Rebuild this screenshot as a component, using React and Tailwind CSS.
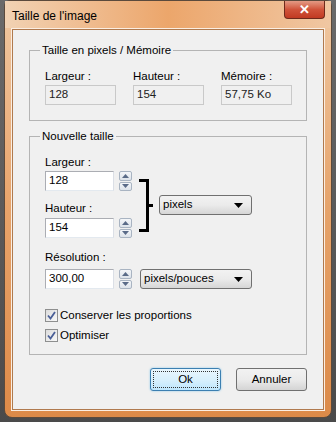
import React from 'react';

const font = { fontFamily: '"Liberation Sans", Arial, sans-serif' };

function Spin() {
  return (
    <div className="flex h-[20px] w-[13px] flex-col gap-px">
      <div className="flex flex-1 items-center justify-center rounded-[2px] border border-[#a9b4c2] bg-gradient-to-b from-[#f4f6f9] to-[#dde3ea]">
        <svg width="7" height="4" viewBox="0 0 7 4"><path d="M0 4 L3.5 0 L7 4 Z" fill="#5a6b88" /></svg>
      </div>
      <div className="flex flex-1 items-center justify-center rounded-[2px] border border-[#a9b4c2] bg-gradient-to-b from-[#f4f6f9] to-[#dde3ea]">
        <svg width="7" height="4" viewBox="0 0 7 4"><path d="M0 0 L7 0 L3.5 4 Z" fill="#5a6b88" /></svg>
      </div>
    </div>
  );
}

function Field({ value }) {
  return (
    <div className="flex items-center gap-[5px]">
      <div className="flex h-[20px] w-[69px] items-center border border-[#abadb3] border-b-[#e3e9ef] border-r-[#dbdfe6] bg-white pl-[3px] text-black">
        {value}
      </div>
      <Spin />
    </div>
  );
}

function Combo({ label, width }) {
  return (
    <div
      className={`flex h-[20px] items-center justify-between rounded-[3px] border border-[#707070] bg-gradient-to-b from-[#f2f2f2] via-[#ebebeb] to-[#d6d6d6] pl-[3px] pr-[8px] text-black ${width}`}
    >
      <span>{label}</span>
      <svg width="9" height="5" viewBox="0 0 9 5"><path d="M0 0 L9 0 L4.5 5 Z" fill="#000" /></svg>
    </div>
  );
}

function Check({ label }) {
  return (
    <label className="flex h-[13px] items-center gap-[2px] text-black">
      <span className="flex h-[13px] w-[13px] items-center justify-center border border-[#8e8f8f] bg-gradient-to-br from-[#dcdcdc] to-[#f8f8f8]">
        <svg width="9" height="9" viewBox="0 0 9 9">
          <path d="M1 4.5 L3.5 7.5 L8 1" fill="none" stroke="#4a5f97" strokeWidth="1.8" />
        </svg>
      </span>
      <span>{label}</span>
    </label>
  );
}

function Button({ children, primary }) {
  return (
    <button
      className={`flex h-[23px] w-[71px] items-center justify-center rounded-[3px] border text-black ${
        primary
          ? 'border-[#3c7fb1] bg-gradient-to-b from-[#eaf6fd] via-[#d9f0fc] to-[#bee6fd] shadow-[0_0_2px_#7ec3e8]'
          : 'border-[#707070] bg-gradient-to-b from-[#f2f2f2] via-[#ebebeb] to-[#d4d4d4]'
      }`}
    >
      {primary ? (
        <span className="flex h-[17px] w-[65px] items-center justify-center border border-dotted border-[#333]">
          {children}
        </span>
      ) : (
        children
      )}
    </button>
  );
}

export default function App() {
  return (
    <div className="h-[422px] w-[336px] overflow-hidden bg-gradient-to-b from-[#6a6a6a] to-[#4a4a4a]" style={font}>
      <div className="ml-[4px] h-[418px] w-[328px] rounded-b-[8px] rounded-t-[6px] border border-[#5b4a3c] bg-gradient-to-b from-[#efc8a2] via-[#e6a36a] to-[#dc8a48]">
        {/* barre de titre */}
        <div className="flex h-[27px] items-start justify-between bg-gradient-to-r from-[#f1d2b3] via-[#eca66b] to-[#f0c7a2] pl-[7px] pr-[6px]">
          <span className="mt-[6px] text-[12px] text-black">Taille de l'image</span>
          <div className="flex h-[18px] w-[41px] items-center justify-center rounded-b-[4px] border border-t-0 border-[#6e2a1c] bg-gradient-to-b from-[#e39a84] via-[#d0533a] to-[#c13a22] text-[13px] font-bold leading-none text-white">
            ✕
          </div>
        </div>

        {/* zone cliente */}
        <div className="mx-[6px] h-[383px] border border-[#fbeee2] bg-[#fbeee2]">
          <div className="h-full border border-[#b07a4e] bg-[#f0f0f0] px-[16px] pt-[13px] text-[11.5px] text-black">
            <fieldset className="border border-[#b4b4b4] pb-[15px] pl-[15px] pr-[14px]">
              <legend className="ml-[-5px] px-[2px] leading-[14px]">Taille en pixels / Mémoire</legend>
              <div className="mt-[12px] grid grid-cols-[71px_71px_71px] gap-x-[17px]">
                {[
                  ['Largeur :', '128'],
                  ['Hauteur :', '154'],
                  ['Mémoire :', '57,75 Ko'],
                ].map(([l, v]) => (
                  <div key={l} className="flex flex-col gap-[2px]">
                    <span className="leading-[14px]">{l}</span>
                    <div className="flex h-[20px] items-center border border-[#c9c9c9] bg-[#f0f0f0] pl-[3px] text-[#222]">
                      {v}
                    </div>
                  </div>
                ))}
              </div>
            </fieldset>

            <fieldset className="mt-[8px] border border-[#b4b4b4] pb-[12px] pl-[15px] pr-[14px]">
              <legend className="ml-[-5px] px-[2px] leading-[14px]">Nouvelle taille</legend>
              <div className="mt-[12px] flex items-start">
                <div className="flex flex-col">
                  <span className="leading-[14px]">Largeur :</span>
                  <div className="mt-[2px]">
                    <Field value="128" />
                  </div>
                  <span className="mt-[10px] leading-[14px]">Hauteur :</span>
                  <div className="mt-[3px]">
                    <Field value="154" />
                  </div>
                </div>
                <svg className="ml-[7px] mt-[24px]" width="15" height="53" viewBox="0 0 15 53">
                  <path d="M0 1.5 H8.5 V51.5 H0 M8.5 26.5 H14" fill="none" stroke="#000" strokeWidth="3" />
                </svg>
                <div className="ml-[5px] mt-[40px]">
                  <Combo label="pixels" width="w-[93px]" />
                </div>
              </div>

              <span className="mt-[12px] block leading-[14px]">Résolution :</span>
              <div className="mt-[5px] flex items-center">
                <Field value="300,00" />
                <div className="ml-[8px]">
                  <Combo label="pixels/pouces" width="w-[112px]" />
                </div>
              </div>

              <div className="mt-[20px] flex flex-col gap-[7px]">
                <Check label="Conserver les proportions" />
                <Check label="Optimiser" />
              </div>
            </fieldset>

            <div className="mt-[13px] flex justify-end gap-[15px]">
              <Button primary>Ok</Button>
              <Button>Annuler</Button>
            </div>
          </div>
        </div>
      </div>
    </div>
  );
}
